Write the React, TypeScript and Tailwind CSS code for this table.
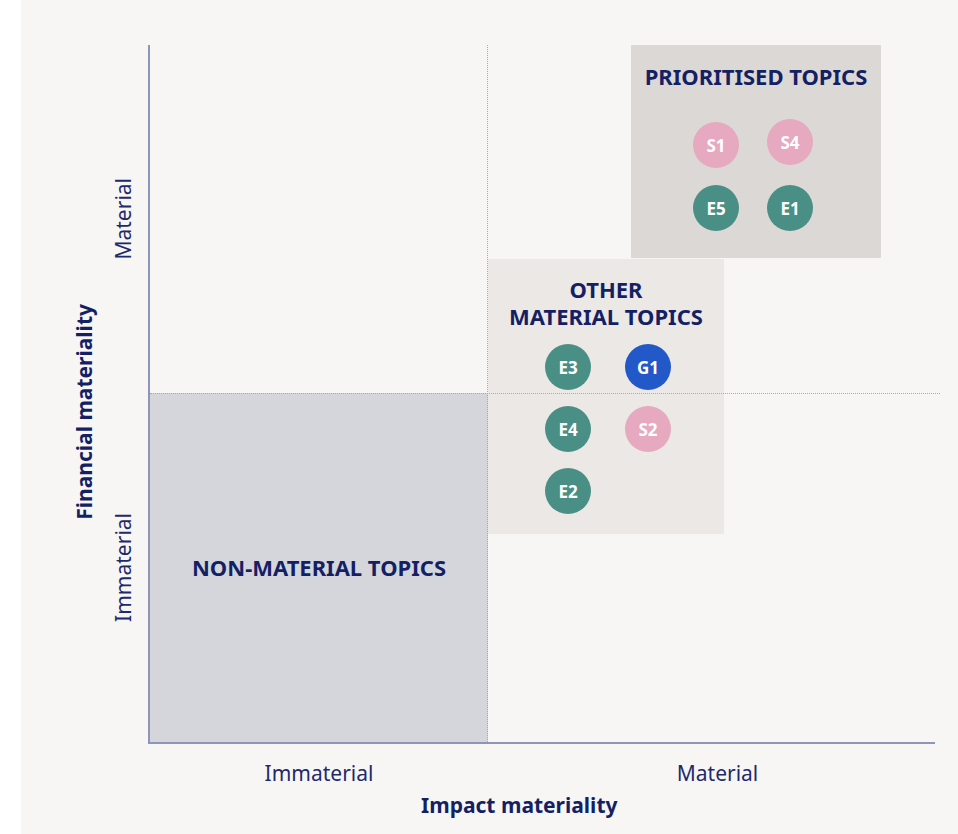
import React from "react";

type C = { label: string; color: string };

const PINK = "bg-[#e6a9c0]";
const TEAL = "bg-[#4a8f86]";
const BLUE = "bg-[#2358c9]";

function Dot({ label, color }: C) {
  return (
    <div
      className={`${color} w-[46px] h-[46px] rounded-full flex items-center justify-center text-white font-bold text-[17px] leading-none`}
    >
      {label}
    </div>
  );
}

export default function App() {
  const font = { fontFamily: '"Noto Sans", "Open Sans", sans-serif' };
  return (
    <div className="w-[958px] h-[834px] bg-white pl-[21px]" style={font}>
      <div className="h-full bg-[#f7f6f4] pt-[45px] text-[#18236a]">
        <div className="flex pl-[42px]">
          {/* Y axis title */}
          <div className="w-[42px] h-[699px] flex items-center justify-center pt-[34px]">
            <div className="[writing-mode:vertical-rl] rotate-180 font-bold text-[21px] leading-none text-[#141f64] whitespace-nowrap">
              Financial materiality
            </div>
          </div>
          {/* Y axis labels */}
          <div className="w-[36px] h-[697px] flex flex-col">
            <div className="h-[348px] flex items-center justify-center">
              <div className="[writing-mode:vertical-rl] rotate-180 text-[21px] leading-none text-[#1e2a6c] whitespace-nowrap">
                Material
              </div>
            </div>
            <div className="flex-1 flex items-center justify-center">
              <div className="[writing-mode:vertical-rl] rotate-180 text-[21px] leading-none text-[#1e2a6c] whitespace-nowrap">
                Immaterial
              </div>
            </div>
          </div>
          <div className="w-[7px]" />
          {/* Plot */}
          <div className="relative w-[787px] h-[699px] border-l-2 border-b-2 border-[#8f95ba] flex">
            {/* Left column */}
            <div className="w-[338px] flex flex-col">
              <div className="h-[348px]" />
              <div className="flex-1 bg-[#d5d6dc] flex items-center justify-center">
                <div className="font-bold text-[22px] text-[#141f64] whitespace-nowrap">
                  NON-MATERIAL TOPICS
                </div>
              </div>
            </div>
            {/* Right column */}
            <div className="flex-1 flex flex-col">
              <div className="ml-[143px] w-[250px] h-[213px] bg-[#dcd8d5] flex flex-col">
                <div className="pt-[17px] text-center font-bold text-[22px] leading-[28px] text-[#141f64] whitespace-nowrap">
                  PRIORITISED TOPICS
                </div>
                <div className="mt-[32px] ml-[62px] grid grid-cols-[46px_46px] gap-x-[28px] gap-y-[17px]">
                  <Dot label="S1" color={PINK} />
                  <div className="-mt-[3px]">
                    <Dot label="S4" color={PINK} />
                  </div>
                  <Dot label="E5" color={TEAL} />
                  <Dot label="E1" color={TEAL} />
                </div>
              </div>
              <div className="mt-[1px] w-[236px] h-[275px] bg-[#ebe8e5] flex flex-col">
                <div className="pt-[17px] text-center font-bold text-[22px] leading-[27px] text-[#141f64]">
                  <div>OTHER</div>
                  <div>MATERIAL TOPICS</div>
                </div>
                <div className="mt-[14px] ml-[57px] grid grid-cols-[46px_46px] gap-x-[34px] gap-y-[16px]">
                  <Dot label="E3" color={TEAL} />
                  <Dot label="G1" color={BLUE} />
                  <Dot label="E4" color={TEAL} />
                  <Dot label="S2" color={PINK} />
                  <Dot label="E2" color={TEAL} />
                </div>
              </div>
            </div>
            {/* dotted dividers */}
            <div className="absolute left-[337px] top-0 bottom-0 border-l border-dotted border-[#a4a8c2]" />
            <div className="absolute left-0 right-[-5px] top-[348px] border-t border-dotted border-[#a4a8c2]" />
          </div>
        </div>
        {/* X axis labels */}
        <div className="flex pl-[129px] w-[914px]">
          <div className="w-[338px] pt-[15px] text-center text-[21px] leading-[28px] text-[#1e2a6c]">
            Immaterial
          </div>
          <div className="flex-1 pt-[15px] pl-[12px] text-center text-[21px] leading-[28px] text-[#1e2a6c]">
            Material
          </div>
        </div>
        <div className="pl-[400px] pt-[4px] text-[21px] leading-[28px] font-bold text-[#141f64] whitespace-nowrap">
          Impact materiality
        </div>
      </div>
    </div>
  );
}
